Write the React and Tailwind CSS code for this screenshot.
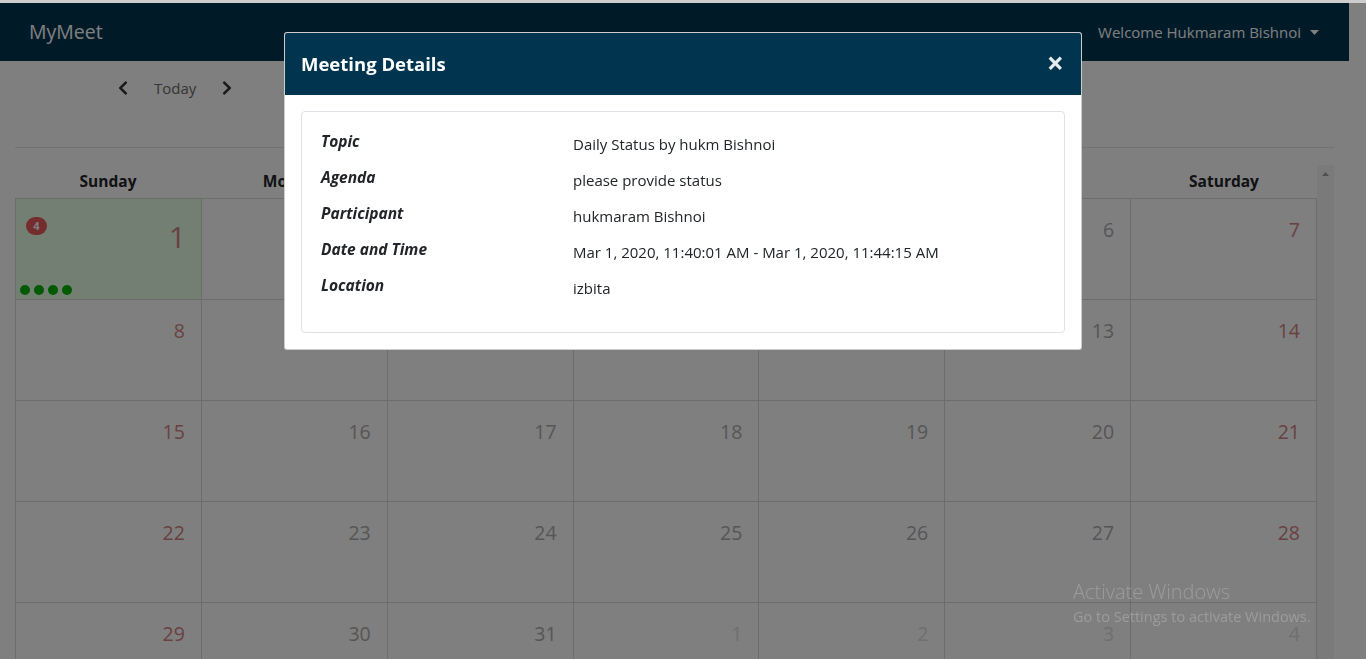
import React from 'react';
import { FaChevronLeft, FaChevronRight } from 'react-icons/fa';

const days = ['Sunday', 'Monday', 'Tuesday', 'Wednesday', 'Thursday', 'Friday', 'Saturday'];

// March 2020, first day is a Sunday
const weeks = [
  [1, 2, 3, 4, 5, 6, 7],
  [8, 9, 10, 11, 12, 13, 14],
  [15, 16, 17, 18, 19, 20, 21],
  [22, 23, 24, 25, 26, 27, 28],
  [29, 30, 31, -1, -2, -3, -4],
];

const details = [
  { label: 'Topic', value: 'Daily Status by hukm Bishnoi' },
  { label: 'Agenda', value: 'please provide status' },
  { label: 'Participant', value: 'hukmaram Bishnoi' },
  { label: 'Date and Time', value: 'Mar 1, 2020, 11:40:01 AM - Mar 1, 2020, 11:44:15 AM' },
  { label: 'Location', value: 'izbita' },
];

const Navbar = () => (
  <nav className="h-[58px] bg-[#00344f] flex items-center justify-between pl-[29px] pr-[30px]">
    <span className="text-[19.5px] text-white">MyMeet</span>
    <div className="flex items-center text-white text-[15px]">
      <span>Welcome Hukmaram Bishnoi</span>
      <svg width="9" height="5" viewBox="0 0 9 5" className="ml-[9px]">
        <path d="M0 0h9L4.5 5z" fill="#ffffff" />
      </svg>
    </div>
  </nav>
);

const DayCell = ({ day, col }) => {
  const other = day < 0;
  const num = Math.abs(day);
  const weekend = col === 0 || col === 6;
  const color = other ? 'text-[#dedede]' : weekend ? 'text-[#d08282]' : 'text-[#acacac]';
  const today = day === 1;

  if (today) {
    return (
      <div className="h-[101px] border-r border-b border-[#d9d9d9] bg-[#e9ffe9] flex flex-col pl-[4px] pr-[15px] pb-[4px]">
        <div className="flex items-start justify-between">
          <span className="mt-[18px] ml-[6px] w-[21px] h-[18px] rounded-full bg-[#e85858] text-white text-[11px] font-bold flex items-center justify-center">
            4
          </span>
          <span className={`mt-[20px] text-[30px] leading-[36px] ${color}`}>{num}</span>
        </div>
        <div className="mt-auto flex gap-[4px]">
          {[0, 1, 2, 3].map((i) => (
            <span key={i} className="w-[10px] h-[10px] rounded-full bg-[#00b400]" />
          ))}
        </div>
      </div>
    );
  }

  return (
    <div className="h-[101px] border-r border-b border-[#d9d9d9] flex justify-end pr-[16px] pt-[19px]">
      <span className={`text-[19.5px] leading-[24px] ${color}`}>{num}</span>
    </div>
  );
};

const Calendar = () => (
  <main className="px-[15px]">
    <div className="mt-[15px] flex items-center pl-[100px] h-[24px]">
      <FaChevronLeft size={16} className="text-[#333333]" />
      <span className="ml-[23px] mr-[23px] text-[15px] text-[#6a6a6a]">Today</span>
      <FaChevronRight size={16} className="text-[#333333]" />
    </div>
    <div className="mt-[47px] border-t border-[#e5e5e5]" />
    <div className="mt-[17px] flex">
      <div className="w-[1302px]">
        <div className="grid grid-cols-7 h-[33px] items-center">
          {days.map((d) => (
            <div key={d} className="text-center font-bold text-[15.5px] text-[#212529]">
              {d}
            </div>
          ))}
        </div>
        <div className="grid grid-cols-7 border-l border-t border-[#d9d9d9]">
          {weeks.map((week, r) =>
            week.map((day, c) => <DayCell key={`${r}-${c}`} day={day} col={c} />)
          )}
        </div>
      </div>
      <div className="w-[17px] bg-[#f5f5f5] flex justify-center pt-[7px]">
        <svg width="7" height="4" viewBox="0 0 7 4">
          <path d="M0 4L3.5 0L7 4z" fill="#a3a3a3" />
        </svg>
      </div>
    </div>
  </main>
);

const MeetingModal = () => (
  <div className="fixed inset-x-0 bottom-0 top-[3px] z-40 bg-black/50">
    <div className="mx-auto mt-[29px] w-[798px] bg-white border border-black/20 rounded-[3px] overflow-hidden">
      <div className="h-[62px] bg-[#00344f] flex items-center justify-between px-[16px]">
        <h5 className="text-[18.5px] font-bold text-white">Meeting Details</h5>
        <span className="text-[30px] leading-none font-bold text-white/90 mr-[1px] -mt-[2px]">×</span>
      </div>
      <div className="p-[16px]">
        <div className="border border-[#dee2e6] rounded-[4px] px-[19px] pt-[20px] pb-[20px]">
          {details.map((d) => (
            <div key={d.label} className="flex mb-[12px]">
              <h6 className="w-[252px] shrink-0 text-[15.5px] leading-[1.2] font-bold italic text-[#212529]">
                {d.label}
              </h6>
              <p className="text-[15px] leading-[24px] text-[#212529]">{d.value}</p>
            </div>
          ))}
        </div>
      </div>
    </div>
  </div>
);

const Watermark = () => (
  <div className="fixed left-[1073px] top-[580px] z-50 text-[#9c9c9c] pointer-events-none">
    <div className="text-[20px] leading-[24px] font-light">Activate Windows</div>
    <div className="text-[14.5px] leading-[20px] mt-[3px]">Go to Settings to activate Windows.</div>
  </div>
);

export default function App() {
  return (
    <div className="min-h-screen bg-white font-['Open_Sans',sans-serif] overflow-hidden h-[659px]">
      <div className="h-[3px] bg-[#cdcdcd] relative z-50" />
      <div className="pr-[17px]">
        <Navbar />
        <Calendar />
      </div>
      <MeetingModal />
      <Watermark />
    </div>
  );
}
